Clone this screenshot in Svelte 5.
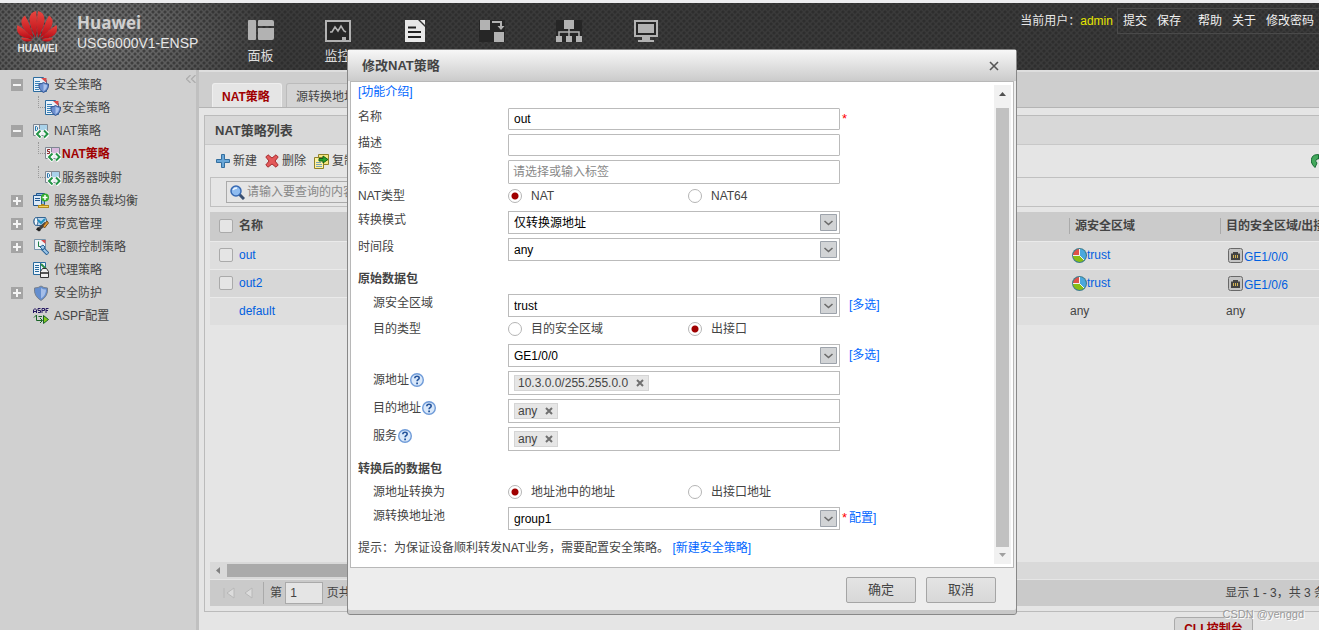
<script lang="ts">
	type Leaf = { label: string; icon: string; active?: boolean };
	type Branch = { label: string; icon: string; toggle?: '+' | '-'; children?: Leaf[] };

	const nav = [
		{ label: '面板', icon: 'panel' },
		{ label: '监控', icon: 'monitor' },
		{ label: '策略', icon: 'policy' },
		{ label: '对象', icon: 'object' },
		{ label: '网络', icon: 'network' },
		{ label: '系统', icon: 'system' }
	];

	const tree: Branch[] = [
		{
			label: '安全策略',
			icon: 'docshield',
			toggle: '-',
			children: [{ label: '安全策略', icon: 'docshield' }]
		},
		{
			label: 'NAT策略',
			icon: 'nat',
			toggle: '-',
			children: [
				{ label: 'NAT策略', icon: 'snat', active: true },
				{ label: '服务器映射', icon: 'dnat' }
			]
		},
		{ label: '服务器负载均衡', icon: 'balance', toggle: '+' },
		{ label: '带宽管理', icon: 'bandwidth', toggle: '+' },
		{ label: '配额控制策略', icon: 'quota', toggle: '+' },
		{ label: '代理策略', icon: 'proxy' },
		{ label: '安全防护', icon: 'shield', toggle: '+' },
		{ label: 'ASPF配置', icon: 'aspf' }
	];

	const rows = [
		{ name: 'out', zone: 'trust', target: 'GE1/0/0' },
		{ name: 'out2', zone: 'trust', target: 'GE1/0/6' },
		{ name: 'default', zone: '', target: '' }
	];

	let name = $state('out');
	let description = $state('');
	let natType = $state('nat');
	let targetType = $state('interface');
	let translateTo = $state('pool');
	let page = $state('1');
	let sources = $state(['10.3.0.0/255.255.0.0']);
	let targets = $state(['any']);
	let services = $state(['any']);
</script>

<svelte:head>
	<title>USG6000V1-ENSP</title>
</svelte:head>

{#snippet treeIcon(kind: string)}
	<svg class="tree-icon" width="16" height="16" viewBox="0 0 16 16" aria-hidden="true">
		{#if kind === 'docshield'}
			<path d="M.5.5h10l3 3v11H.5z" fill="#e8f2fa" stroke="#2c6c9f" />
			<path d="M8 1h5.500v5z" fill="#d94b4b" />
			<path d="M2 4.500h5M2 6.500h8M2 8.500h4M2 10.500h4M2 12.500h4" stroke="#3c83b8" />
			<path d="M6 7q2.500 0 4.500-1.500q2 1.500 5 1.500q.5 6-5 8.500q-5-2.500-4.500-8.500z" fill="#6b8fd0" stroke="#36548f" />
			<path d="M10.500 7v7q3.500-2 3.500-6z" fill="#a9c1ec" />
		{:else if kind === 'nat' || kind === 'snat' || kind === 'dnat'}
			<path d="M.5 1.500h14v11H.5z" fill="#eceef2" stroke="#7e8792" />
			<path d="M7 2h7v5H7z" fill={kind === 'snat' ? '#d9b9dd' : '#a9d2ea'} />
			<path d="M6.500 2v6" stroke="#7e8792" />
			{#if kind === 'snat'}
				<path d="M5 3.500H2.500v2h2v2H2" fill="none" stroke="#8d2b2b" />
			{:else}
				<path d="M2.500 3.500h1l1 1v2l-1 1h-1z" fill="none" stroke="#2277ad" />
			{/if}
			<path d="M8 7.500L4 11l4 4M11 7.500l4 3.500-4 4" fill="none" stroke="#fff" stroke-width="4" />
			<path d="M7.500 7.500L4 11l3.500 3.500M11 7.500l3.500 3.500-3.500 3.500" fill="none" stroke="#249447" stroke-width="2" />
		{:else if kind === 'balance'}
			<path d="M3.500.5h8v11h-8z" fill="#8bb8df" stroke="#21578f" />
			<path d="M.5 2.500h8v10h-8z" fill="#dceaf7" stroke="#21578f" />
			<path d="M2 5.500h5M2 7.500h5" stroke="#21578f" />
			<circle cx="12" cy="4.500" r="4" fill="#35ad2c" />
			<path d="M12 2v5M9.500 4.500h5" stroke="#fff" stroke-width="1.500" />
			<path d="M5 13.500h11M9.500 11v3" stroke="#b28a1d" stroke-width="3" />
			<path d="M6 13.500h9" stroke="#f5d55c" />
		{:else if kind === 'bandwidth'}
			<path d="M2.500 1.500h10q3 4 0 8h-10q-3.500-4 0-8z" fill="#b9d6ef" stroke="#356592" />
			<ellipse cx="3" cy="5.500" rx="2" ry="4" fill="#f3f8fc" stroke="#356592" />
			<path d="M5 4l3 3 4-4" stroke="#1e91c0" stroke-width="2" fill="none" />
			<path d="M6 13l7-6" stroke="#444" stroke-width="3" />
			<path d="M10 10l4-5 1.500 2-4 5z" fill="#e09430" stroke="#76501e" />
			<path d="M5 11l3 3-2 1.500-3-2z" fill="#222" />
		{:else if kind === 'quota'}
			<path d="M1.500.5h11v10h-11z" fill="#eef3f8" stroke="#7693aa" />
			<path d="M8 1h4.500v4z" fill="#d94b4b" />
			<path d="M5.500 2.500v5H9" stroke="#208044" fill="none" />
			<path d="M9 9l6 6" stroke="#2c6396" stroke-width="4" />
			<path d="M9 9l5.500 5.500" stroke="#9dc7e9" stroke-width="2" />
			<path d="M7 8l3-2 2 2-2 3z" fill="#9dc7e9" stroke="#2c6396" />
		{:else if kind === 'proxy'}
			<path d="M.5.5h7v12h-7zM7.500.5h5v12h-5z" fill="#edf5fb" stroke="#286a9d" />
			<path d="M2 3.500h4M2 5.500h4M2 7.500h4M2 9.500h4" stroke="#286a9d" />
			<path d="M8 2l5 5" stroke="#2b8a45" stroke-width="2" />
			<path d="M7.500 9.500l2-3h4l2 3v6h-8z" fill="#eee" stroke="#333" />
			<path d="M8 10h7v2H8z" fill="#555" />
		{:else if kind === 'shield'}
			<path d="M1.500 3Q5.500 3 8 1q2.500 2 6.500 2 1 8-6.500 12.500Q.5 11 1.500 3z" fill="#648ecf" stroke="#77808d" />
			<path d="M8 3q2 1.500 5 1.500 0 6-5 9z" fill="#a5bee8" />
		{:else if kind === 'aspf'}
			<path d="M.5 5V2L2 .5 3.500 2v3M.5 3.500h3M7.500.5H5v2h2.500v2H5M9 5V.5h2.500v2H9M13 5V.5h2.500M13 2.500h2" fill="none" stroke="#251760" />
			<path d="M3.500 7v5.500H9M1 9.500L3.500 7M7 10l2.500 2.500L7 15M5.500 8.500H9" fill="none" stroke="#176326" />
			<path d="M10.500 7.500l5 4-5 4z" fill="#86c91c" stroke="#176326" />
		{/if}
	</svg>
{/snippet}

{#snippet picker(id: string, value: string)}
	<span class="select">
		<select {id}>
			<option>{value}</option>
		</select>
		<svg class="arrow" width="17" height="17" viewBox="0 0 17 17" aria-hidden="true">
			<path d="M.5.5h16v16H.5z" fill="#d2d4d6" stroke="#9da3ab" />
			<path d="M4.500 7l4 3.500 4-3.500" fill="none" stroke="#6b6b6b" stroke-width="1.600" />
		</svg>
	</span>
{/snippet}

{#snippet help()}
	<svg class="help" width="14" height="14" viewBox="0 0 14 14" aria-hidden="true">
		<circle cx="7" cy="7" r="6.300" fill="#d9e8fa" stroke="#6f9bd8" stroke-width="1.400" />
		<path d="M4.800 5.300q.1-2 2.200-2t2.200 1.700q0 1-1.200 1.700-.9.600-.9 1.600" fill="none" stroke="#25549b" stroke-width="1.600" />
		<path d="M6.200 9.500H8v1.700H6.200z" fill="#25549b" />
	</svg>
{/snippet}

{#snippet tags(label: string, items: string[])}
	<div class="tag-box" role="group" aria-label={label}>
		{#each items as item}
			<span class="tag">
				{item}
				<button type="button" aria-label="删除 {item}" onclick={() => items.splice(items.indexOf(item), 1)}>
					<svg width="8" height="8" viewBox="0 0 8 8"><path d="M1 1l6 6M7 1L1 7" stroke="#707070" stroke-width="2" /></svg>
				</button>
			</span>
		{/each}
	</div>
{/snippet}

<div class="page">
	<header>
		<div class="brand">
			<div class="logo">
				<svg width="40" height="31" viewBox="0 0 40 31" aria-hidden="true">
					<defs>
						<linearGradient id="petal" x1="0" y1="0" x2="0" y2="1">
							<stop offset="0" stop-color="#e8453f" />
							<stop offset="1" stop-color="#b80813" />
						</linearGradient>
					</defs>
					<g fill="url(#petal)">
						<path d="M19 27Q12 14 12.500 8 13 1 19 0q2 12 0 27z" />
						<path d="M21 27q7-13 6.500-19Q27 1 21 0q-2 12 0 27z" />
						<path d="M17 27Q5 19 4.500 12 4 7 8 4.500 13 13 17 27z" />
						<path d="M23 27q12-8 12.500-15 .5-5-3.500-7.500Q27 13 23 27z" />
						<path d="M16 28Q3 27 .5 21-.5 17 .5 14 9 19 16 28z" />
						<path d="M24 28q13-1 15.500-7 1-4 0-7Q31 19 24 28z" />
						<path d="M15.500 29Q7 33 4 26.500q6 0 11.500 2.500z" />
						<path d="M24.500 29q8.500 4 11.500-2.500-6 0-11.500 2.500z" />
					</g>
				</svg>
				<span>HUAWEI</span>
			</div>
			<div class="product">
				<strong>Huawei</strong>
				<span>USG6000V1-ENSP</span>
			</div>
		</div>

		<nav>
			{#each nav as item}
				<a href="#{item.icon}" class:current={item.icon === 'policy'}>
					<svg width="26" height="24" viewBox="0 0 26 24" aria-hidden="true">
						{#if item.icon === 'panel'}
							<path d="M1 1h6q1 0 1 1v18q0 1-1 1H1q-1 0-1-1V2q0-1 1-1zM11 1h13q2 0 2 2v4H10V2q0-1 1-1zM10 9h16v10q0 2-2 2H11q-1 0-1-1z" />
						{:else if item.icon === 'monitor'}
							<path d="M1 2h24v20H1z" fill="#262626" stroke="currentColor" stroke-width="2" />
							<path d="M5 13h2l3-5 3 4 3-5 3 5 2 1" fill="none" stroke="currentColor" stroke-width="1.600" />
							<path d="M17 18h4v3h-4z" />
						{:else if item.icon === 'policy'}
							<path d="M3 1h13l7 7v15H3z" />
							<path d="M18 1h5v5z" />
							<path d="M6 8.500h8M6 13h13M6 18h13" stroke="#222" stroke-width="2" />
						{:else if item.icon === 'object'}
							<path d="M0 1h26v22H0z" fill="#262626" />
							<path d="M1 1h10v10H1zM15 13h10v10H15zM13 2h10v5h2.500L22 11l-3.500-4H21V4h-8z" />
						{:else if item.icon === 'network'}
							<path d="M0 1h26v22H0z" fill="#262626" />
							<path d="M8 1h10v9H8zM0 17h6v6H0zM10 17h6v6h-6zM20 17h6v6h-6z" />
							<path d="M13 9v9M3 18v-5h20v5" fill="none" stroke="currentColor" stroke-width="1.500" />
						{:else}
							<path d="M2 2h22v15H2z" fill="#262626" stroke="currentColor" stroke-width="2" />
							<path d="M5 5h16v9H5zM9 18h8v3h4v2H5v-2h4z" />
						{/if}
					</svg>
					<span>{item.label}</span>
				</a>
			{/each}
		</nav>

		<div class="account">
			<span>当前用户：<b>admin</b></span>
			<div class="account-links">
				<a href="#commit">提交</a>
				<a href="#save">保存</a>
				<a href="#help" class="split">帮助</a>
				<a href="#about">关于</a>
				<a href="#password">修改密码</a>
			</div>
		</div>
	</header>

	<div class="content">
		<aside>
			<button type="button" class="collapse" aria-label="收起">
				<svg width="10" height="8" viewBox="0 0 10 8"><path d="M4.500 0l-4 4 4 4M9.500 0l-4 4 4 4" fill="none" stroke="#adadad" stroke-width="1.300" /></svg>
			</button>
			<ul>
				{#each tree as item}
					<li>
						<div class="node">
							{#if item.toggle}
								<button type="button" class="toggle" aria-label={item.label}>
									<svg width="12" height="12" viewBox="0 0 12 12">
										<path d="M0 0h12v12H0z" fill="#a4a4a4" />
										<path d={item.toggle === '-' ? 'M2 6h8' : 'M2 6h8M6 2v8'} stroke="#f4f4f4" stroke-width="2" />
									</svg>
								</button>
							{:else}
								<span class="toggle"></span>
							{/if}
							{@render treeIcon(item.icon)}
							<a href="#{item.icon}">{item.label}</a>
						</div>
						{#if item.children}
							<ul class="children">
								{#each item.children as child}
									<li class="node" class:active={child.active}>
										<span class="branch"></span>
										{@render treeIcon(child.icon)}
										<a href="#{child.icon}">{child.label}</a>
									</li>
								{/each}
							</ul>
						{/if}
					</li>
				{/each}
			</ul>
		</aside>

		<main>
			<div class="tabs">
				<a href="#nat" class="tab selected">NAT策略</a>
				<a href="#pool" class="tab">源转换地址池</a>
			</div>

			<section class="panel">
				<h1>NAT策略列表</h1>
				<div class="toolbar">
					<button type="button">
						<svg width="14" height="14" viewBox="0 0 14 14" aria-hidden="true">
							<path d="M5.500.5h3v5h5v3h-5v5h-3v-5h-5v-3h5z" fill="#69a7d8" stroke="#346f9f" />
						</svg>
						新建
					</button>
					<button type="button">
						<svg width="14" height="14" viewBox="0 0 14 14" aria-hidden="true">
							<path d="M3 .8L7 4l4-3.200L13.200 3 10 7l3.200 4-2.200 2.200L7 10l-4 3.200L.8 11 4 7 .8 3z" fill="#e3595a" stroke="#a52d30" />
						</svg>
						删除
					</button>
					<button type="button">
						<svg width="15" height="15" viewBox="0 0 15 15" aria-hidden="true">
							<path d="M4.500.5h10v10h-10z" fill="#f5e680" stroke="#8f8128" />
							<path d="M.5 3.500h9v11h-9z" fill="#fff2a0" stroke="#8f8128" />
							<path d="M2 8.500h5M2 10.500h6M2 12.500h6" stroke="#78a0b8" />
							<path d="M5 4.500h4V2l5 3.500L9 9V7H5z" fill="#28a228" stroke="#145e19" />
						</svg>
						复制
					</button>
					<button type="button" class="refresh" aria-label="刷新">
						<svg width="16" height="14" viewBox="0 0 16 14">
							<path d="M4 13.500Q-2 8 1.500 2.500 3 .5 7.500.5V5H6q-3 2 0 4zM12 .5q6 5.500 2.500 11-1.500 2-6 2V9H10q3-2 0-4z" fill="#43a85c" stroke="#176b33" />
						</svg>
					</button>
				</div>

				<div class="search">
					<label>
						<svg width="15" height="15" viewBox="0 0 15 15" aria-hidden="true">
							<path d="M9 9l5 5" stroke="#3b5071" stroke-width="3" />
							<circle cx="6" cy="6" r="5" fill="#8fbcf0" stroke="#3769b2" stroke-width="1.500" />
							<path d="M3 5q1-2 4-2" stroke="#eef6ff" fill="none" stroke-width="1.500" />
						</svg>
						<input type="text" placeholder="请输入要查询的内容" aria-label="请输入要查询的内容" />
					</label>
				</div>

				<div class="grid">
					<table>
						<thead>
							<tr>
								<th class="check"><input type="checkbox" aria-label="全选" /></th>
								<th>名称</th>
								<th class="zone"><span>源安全区域</span></th>
								<th class="target"><span>目的安全区域/出接口</span></th>
							</tr>
						</thead>
						<tbody>
							{#each rows as row}
								<tr>
									<td class="check">
										{#if row.zone}<input type="checkbox" aria-label={row.name} />{/if}
									</td>
									<td><a href="#{row.name}">{row.name}</a></td>
									<td class="zone">
										{#if row.zone}
											<a href="#zone" class="with-icon">
												<svg width="15" height="15" viewBox="0 0 15 15" aria-hidden="true">
													<circle cx="7.500" cy="7.500" r="7.500" fill="#3d7d8c" />
													<path d="M7.500 7.500V1A6.500 6.500 0 0 0 1 7.500z" fill="#df5149" />
													<path d="M7.500 7.500H1a6.500 6.500 0 0 0 11 4.500z" fill="#88bd17" />
													<path d="M7.500 7.500V1a6.500 6.500 0 0 1 4.500 11z" fill="#4aa8dd" />
													<path d="M7.500 1v6.500H1M7.500 7.500l4.500 4.500" stroke="#f2f2f2" fill="none" />
												</svg>{row.zone}
											</a>
										{:else}any{/if}
									</td>
									<td class="target">
										{#if row.target}
											<a href="#interface" class="with-icon port">
												<svg width="15" height="15" viewBox="0 0 15 15" aria-hidden="true">
													<rect x=".5" y=".5" width="14" height="14" rx="2" fill="#c4c4c4" stroke="#686868" />
													<path d="M3 5.500h2V4h5v1.500h2V12H3z" fill="#444" />
													<path d="M5.500 7v3M7.500 7v3M9.500 7v3" stroke="#d5b555" />
												</svg>
												<span>{row.target}</span>
											</a>
										{:else}any{/if}
									</td>
								</tr>
							{/each}
						</tbody>
					</table>
				</div>

				<div class="hscroll" aria-hidden="true">
					<svg width="17" height="17" viewBox="0 0 17 17"><path d="M10 5v7L6 8.500z" fill="#808080" /></svg>
					<span></span>
				</div>
				<div class="pager">
					<button type="button" aria-label="首页"><svg width="12" height="12" viewBox="0 0 12 12"><path d="M1 1v10M11 1v10L4 6z" fill="#dcdcdc" stroke="#b8b8b8" /></svg></button>
					<button type="button" aria-label="上一页"><svg width="12" height="12" viewBox="0 0 12 12"><path d="M9 1v10L2 6z" fill="#dcdcdc" stroke="#b8b8b8" /></svg></button>
					<label>第 <input type="text" bind:value={page} /> 页共 1 页</label>
					<span class="total">显示 1 - 3，共 3 条</span>
				</div>
			</section>

			<div class="console">
				<button type="button">CLI 控制台</button>
				<span class="watermark">CSDN @yenggd</span>
			</div>
		</main>
	</div>

	<div class="dialog" role="dialog" aria-labelledby="dialog-title">
		<div class="dialog-head">
			<h2 id="dialog-title">修改NAT策略</h2>
			<button type="button" aria-label="关闭">
				<svg width="10" height="10" viewBox="0 0 10 10"><path d="M1 1l8 8M9 1L1 9" stroke="#555" stroke-width="1.600" /></svg>
			</button>
		</div>

		<div class="dialog-body">
			<form id="policy">
				<p class="intro"><a href="#intro">[功能介绍]</a></p>

				<div class="row">
					<label for="name">名称</label>
					<input id="name" type="text" bind:value={name} />
					<span class="required">*</span>
				</div>
				<div class="row">
					<label for="description">描述</label>
					<input id="description" type="text" bind:value={description} />
				</div>
				<div class="row">
					<label for="tag">标签</label>
					<input id="tag" class="tall" type="text" placeholder="请选择或输入标签" />
				</div>
				<div class="row radios">
					<span>NAT类型</span>
					<label><input type="radio" name="nat-type" value="nat" bind:group={natType} />NAT</label>
					<label><input type="radio" name="nat-type" value="nat64" bind:group={natType} />NAT64</label>
				</div>
				<div class="row">
					<label for="mode">转换模式</label>
					{@render picker('mode', '仅转换源地址')}
				</div>
				<div class="row">
					<label for="period">时间段</label>
					{@render picker('period', 'any')}
				</div>

				<h3>原始数据包</h3>
				<div class="row sub">
					<label for="source-zone">源安全区域</label>
					{@render picker('source-zone', 'trust')}
					<a href="#multi-zone">[多选]</a>
				</div>
				<div class="row sub radios">
					<span>目的类型</span>
					<label><input type="radio" name="target-type" value="zone" bind:group={targetType} />目的安全区域</label>
					<label><input type="radio" name="target-type" value="interface" bind:group={targetType} />出接口</label>
				</div>
				<div class="row sub">
					<label for="interface" aria-label="出接口"></label>
					{@render picker('interface', 'GE1/0/0')}
					<a href="#multi-interface">[多选]</a>
				</div>
				<div class="row sub">
					<span class="caption">源地址{@render help()}</span>
					{@render tags('源地址', sources)}
				</div>
				<div class="row sub">
					<span class="caption">目的地址{@render help()}</span>
					{@render tags('目的地址', targets)}
				</div>
				<div class="row sub">
					<span class="caption">服务{@render help()}</span>
					{@render tags('服务', services)}
				</div>

				<h3>转换后的数据包</h3>
				<div class="row sub radios">
					<span>源地址转换为</span>
					<label><input type="radio" name="translate" value="pool" bind:group={translateTo} />地址池中的地址</label>
					<label><input type="radio" name="translate" value="interface" bind:group={translateTo} />出接口地址</label>
				</div>
				<div class="row sub">
					<label for="pool">源转换地址池</label>
					{@render picker('pool', 'group1')}
					<span class="required">*</span>
					<a href="#configure" class="snug">配置]</a>
				</div>
				<p class="hint">提示：为保证设备顺利转发NAT业务，需要配置安全策略。 <a href="#new-policy">[新建安全策略]</a></p>
			</form>
			<div class="vscroll" aria-hidden="true">
				<svg width="17" height="23" viewBox="0 0 17 23"><path d="M5 11h7L8.500 7z" fill="#505050" /></svg>
				<span></span>
				<svg width="17" height="17" viewBox="0 0 17 17"><path d="M5 6h7l-3.500 4z" fill="#a0a0a0" /></svg>
			</div>
		</div>

		<div class="dialog-foot">
			<button type="submit" form="policy">确定</button>
			<button type="button">取消</button>
		</div>
	</div>
</div>

<style>
	:global(body) {
		background: #e5e5e5;
	}

	.page {
		position: relative;
		display: flex;
		flex-direction: column;
		height: 100vh;
		overflow: hidden;
		box-sizing: border-box;
		border-top: 3px solid #ececee;
		color: #444;
		font: 12px/16px 'Liberation Sans', 'Noto Sans CJK SC', sans-serif;
	}

	.page *,
	.page *::before {
		box-sizing: border-box;
	}

	button,
	input,
	select {
		margin: 0;
		color: inherit;
		font: inherit;
	}

	button {
		padding: 0;
		border: 0;
		background: none;
		white-space: nowrap;
	}

	a {
		color: #06f;
		text-decoration: none;
	}

	ul,
	h1,
	h2,
	h3,
	p {
		margin: 0;
		padding: 0;
		list-style: none;
	}

	svg {
		display: block;
		flex: none;
	}

	/* Header */
	header {
		display: flex;
		flex: none;
		align-items: flex-start;
		height: 67px;
		color: #e6e6e6;
		background:
			radial-gradient(circle, #26262699 1px, transparent 2px) 0 0 / 6px 6px,
			radial-gradient(circle, #26262699 1px, transparent 2px) 3px 3px / 6px 6px,
			radial-gradient(ellipse 190px 110px at 90px 34px, #7a7a7a, #3a3a3a);
	}

	.brand {
		display: flex;
		gap: 19px;
		width: 222px;
		padding: 8px 0 0 17px;
	}

	.logo {
		width: 41px;
		text-align: center;
		font: bold 10px/14px 'Liberation Sans', sans-serif;
	}

	.product {
		display: flex;
		flex-direction: column;
		padding-top: 1px;
	}

	.product strong {
		color: #d0d0d0;
		font: bold 17px/22px 'Open Sans', sans-serif;
	}

	.product span {
		font-size: 14px;
		line-height: 18px;
	}

	nav {
		display: flex;
		padding-top: 16px;
	}

	nav a {
		display: flex;
		flex-direction: column;
		align-items: center;
		gap: 5px;
		width: 77px;
		color: #b2b2b2;
	}

	nav a.current {
		color: #e8e8e8;
	}

	nav svg {
		fill: currentColor;
	}

	nav span {
		color: #ddd;
		font-size: 13px;
	}

	.account {
		display: flex;
		align-items: center;
		gap: 4px;
		margin: 5px 0 0 auto;
		white-space: nowrap;
	}

	.account b {
		color: #e6e600;
		font-weight: normal;
	}

	.account-links {
		display: flex;
		gap: 10px;
		padding: 2px 5px;
		border: 1px solid #4a4a4a;
		border-right: 0;
		line-height: 20px;
	}

	.account-links a {
		color: #f0f0f0;
	}

	.account-links a.split {
		padding-left: 7px;
	}

	/* Sidebar */
	.content {
		display: flex;
		flex: 1;
		min-height: 0;
	}

	aside {
		position: relative;
		flex: none;
		width: 199px;
		padding-top: 3px;
		border-right: 3px solid #c0c0c0;
		background: #d0d0d0;
	}

	.collapse {
		position: absolute;
		top: 5px;
		right: 0;
	}

	.node {
		display: flex;
		align-items: center;
		height: 23px;
	}

	.node a {
		color: #444;
		white-space: nowrap;
	}

	.toggle {
		flex: none;
		width: 12px;
		margin: 0 10px 0 11px;
	}

	.tree-icon {
		margin-right: 5px;
	}

	.children .tree-icon {
		margin-right: 1px;
	}

	.branch {
		align-self: flex-start;
		width: 7px;
		height: 12px;
		margin-left: 38px;
		border: dotted #999;
		border-width: 0 0 1px 1px;
	}

	.node.active {
		height: 24px;
	}

	.node.active a {
		color: #a00000;
		font-weight: bold;
	}

	/* List page */
	main {
		display: flex;
		flex: 1;
		flex-direction: column;
		min-width: 0;
		background: #e5e5e5;
	}

	.tabs {
		display: flex;
		align-items: flex-end;
		gap: 4px;
		height: 38px;
		padding-left: 13px;
		border-top: 2px solid #dedede;
		border-bottom: 1px solid #b4b4b4;
		background: #cecece;
	}

	.tab {
		width: 92px;
		height: 24px;
		padding: 0 9px;
		overflow: hidden;
		border: 1px solid #bbb;
		border-bottom: 0;
		border-radius: 3px 3px 0 0;
		background: #d4d4d4;
		color: #444;
		line-height: 26px;
		white-space: nowrap;
	}

	.tab.selected {
		width: 70px;
		border-color: #eee;
		background: #e5e5e5;
		color: #a00000;
		font-weight: bold;
	}

	.panel {
		display: flex;
		flex: 1;
		flex-direction: column;
		min-height: 0;
		margin: 7px 0 0 5px;
		border: 1px solid #bbb;
		border-right: 0;
	}

	h1 {
		height: 29px;
		padding-left: 10px;
		border-bottom: 1px solid #c8c8c8;
		background: #d8d8d8;
		font-size: 13px;
		line-height: 30px;
	}

	.toolbar {
		display: flex;
		align-items: center;
		gap: 8px;
		height: 32px;
		padding-left: 11px;
	}

	.toolbar button {
		display: flex;
		align-items: center;
		gap: 3px;
		line-height: 18px;
	}

	.toolbar .refresh {
		margin: 0 -8px 0 auto;
	}

	.search {
		height: 30px;
		margin-left: 5px;
		padding: 3px 15px;
		border: 1px solid #c0c0c0;
		border-right: 0;
	}

	.search label {
		display: flex;
		align-items: center;
		width: 200px;
		height: 22px;
		padding-left: 3px;
		border: 1px solid #aaa;
	}

	.search input {
		min-width: 0;
		border: 0;
		background: none;
	}

	::placeholder {
		color: #888;
		opacity: 1;
	}

	.grid {
		flex: 1;
		min-height: 0;
		margin: 5px 0 0 5px;
		overflow: hidden;
	}

	table {
		width: 100%;
		border-collapse: collapse;
		table-layout: fixed;
	}

	tr {
		height: 28px;
		border-top: 1px solid #eaeaea;
		background: #dedede;
	}

	tbody tr:nth-child(even) {
		background: #d7d7d7;
	}

	thead tr {
		height: 29px;
		border: 0;
		background: #cbcbcb;
	}

	th,
	td {
		padding: 0;
		overflow: hidden;
		text-align: left;
		white-space: nowrap;
	}

	td a {
		color: #0060e0;
	}

	.check {
		width: 29px;
		padding-left: 9px;
	}

	.zone {
		width: 151px;
	}

	.target {
		width: 99px;
	}

	th > span {
		display: block;
		padding-left: 5px;
		border-left: 1px solid #aaa;
	}

	td.zone {
		padding-left: 1px;
	}

	td.target {
		padding-left: 6px;
	}

	.with-icon {
		display: flex;
		align-items: center;
		padding-left: 2px;
	}

	.port {
		gap: 1px;
	}

	.port span {
		padding-top: 3px;
	}

	[type='checkbox'] {
		display: block;
		width: 14px;
		height: 14px;
		appearance: none;
		border: 1px solid #aaa;
		border-radius: 2px;
		background: #e5e5e5;
	}

	.hscroll {
		display: flex;
		height: 17px;
		margin-left: 5px;
		background: #d9d9d9;
	}

	.hscroll span {
		width: 400px;
		margin: 2px 0;
		background: #aaa;
	}

	.pager {
		display: flex;
		align-items: center;
		gap: 8px;
		height: 26px;
		margin: 1px 0 5px 5px;
		padding-left: 13px;
		background: #cacaca;
		white-space: nowrap;
	}

	.pager label {
		padding-left: 6px;
		border-left: 1px solid #aaa;
	}

	.pager input {
		width: 38px;
		height: 22px;
		padding: 0 4px;
		border: 1px solid #aaa;
		background: #e5e5e5;
	}

	.total {
		margin: 0 -7px 0 auto;
		line-height: 20px;
	}

	.console {
		position: relative;
		flex: none;
		height: 18px;
		padding: 5px 66px 0 0;
		text-align: right;
	}

	.console button {
		width: 79px;
		height: 24px;
		border: 1px solid #aaa;
		border-radius: 3px;
		background: #d6d6d6;
		color: #a00000;
		font-weight: bold;
	}

	.watermark {
		position: absolute;
		top: -6px;
		right: 15px;
		color: #999;
		font-size: 11px;
		text-shadow: 1px 1px #fff;
	}

	/* Dialog */
	.dialog {
		position: absolute;
		top: 46px;
		left: 347px;
		width: 670px;
		border: 1px solid #888;
		border-radius: 3px;
		background: #ededed;
		box-shadow: inset 0 -4px #c8c8c8;
	}

	.dialog-head {
		display: flex;
		align-items: center;
		justify-content: space-between;
		height: 31px;
		padding: 0 17px 0 14px;
		background: linear-gradient(#f7f7f7, #cbcbcb);
	}

	h2 {
		font-size: 13px;
		line-height: 18px;
	}

	.dialog-body {
		display: flex;
		margin: 0 2px;
		border: 1px solid #b8b8b8;
		background: #fff;
	}

	form {
		flex: 1;
		padding-left: 7px;
	}

	.intro {
		height: 22px;
		line-height: 20px;
	}

	.row {
		display: grid;
		grid-template-columns: 150px 332px auto auto 1fr;
		align-items: start;
		margin-top: 4px;
		line-height: 18px;
	}

	.row > :first-child {
		min-height: 16px;
	}

	.sub > :first-child {
		padding-left: 15px;
	}

	.row [type='text'] {
		width: 100%;
		height: 22px;
		padding: 0 5px;
		border: 1px solid #bbb;
		border-radius: 1px;
		color: #000;
	}

	.row .tall {
		height: 24px;
		padding: 0 4px;
	}

	.row > a {
		padding-left: 9px;
		line-height: 22px;
	}

	.required {
		padding-left: 2px;
		color: #f00;
		font-size: 13px;
		line-height: 22px;
	}

	.row > a.snug {
		padding-left: 2px;
	}

	.radios {
		grid-template-columns: 150px 180px auto 1fr;
		align-items: center;
		height: 24px;
		margin-top: 0;
	}

	.radios + .row {
		margin-top: 3px;
	}

	.radios label {
		display: flex;
		align-items: center;
		gap: 9px;
	}

	[type='radio'] {
		width: 14px;
		height: 14px;
		appearance: none;
		border: 1px solid #b5b5b5;
		border-radius: 50%;
		background: #fff;
	}

	[type='radio']:checked {
		background: radial-gradient(circle, #a00000 3px, #fff 4px);
	}

	.select {
		display: grid;
		grid-template-columns: 1fr 17px 3px;
		align-items: center;
	}

	select {
		grid-row: 1;
		grid-column: 1 / -1;
		height: 23px;
		padding: 0 24px 0 5px;
		appearance: none;
		border: 1px solid #bbb;
		border-radius: 0;
		background: #fff;
		color: #000;
	}

	.arrow {
		grid-row: 1;
		grid-column: 2;
		pointer-events: none;
		z-index: 1;
	}

	h3 {
		padding: 10px 0 3px;
		font-size: 12px;
		line-height: 16px;
	}

	.caption {
		display: flex;
		align-items: center;
		gap: 1px;
	}

	.tag-box {
		display: flex;
		align-items: center;
		gap: 4px;
		height: 24px;
		padding: 0 5px;
		border: 1px solid #bbb;
	}

	.tag {
		display: flex;
		align-items: center;
		gap: 8px;
		height: 16px;
		padding: 0 4px 0 3px;
		border: 1px solid #d5d5d5;
		background: #e6e6e6;
	}

	.hint {
		padding-bottom: 1px;
		line-height: 36px;
	}

	.vscroll {
		display: flex;
		flex-direction: column;
		width: 17px;
		margin: 3px 2px;
		background: #f1f1f1;
	}

	.vscroll span {
		flex: 1;
		margin: 0 2px;
		background: #c1c1c1;
	}

	.dialog-foot {
		display: flex;
		justify-content: flex-end;
		gap: 10px;
		padding: 9px 20px 11px;
	}

	.dialog-foot button {
		width: 70px;
		height: 26px;
		border: 1px solid #a5a5a5;
		border-radius: 2px;
		background: linear-gradient(#e4e4e4, #d8d8d8);
		font-size: 13px;
	}
</style>
